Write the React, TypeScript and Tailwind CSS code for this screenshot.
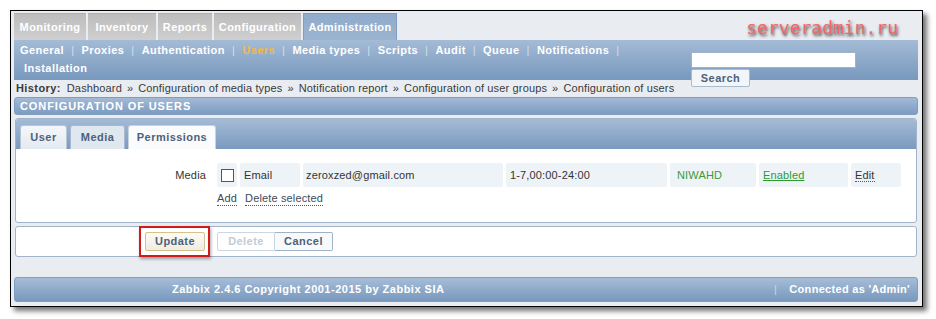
import React from "react";

const mainTabs = [
  { label: "Monitoring", w: "w-[72px]" },
  { label: "Inventory", w: "w-[68px]" },
  { label: "Reports", w: "w-[54px]" },
  { label: "Configuration", w: "w-[87px]" },
];

const subMenu = ["General", "Proxies", "Authentication", "Users", "Media types", "Scripts", "Audit", "Queue", "Notifications"];

const history = [
  "Dashboard",
  "Configuration of media types",
  "Notification report",
  "Configuration of user groups",
  "Configuration of users",
];

const Sep = () => <span className="mx-[7px] font-normal text-[#d3deea]">|</span>;

const App = () => {
  return (
    <div className="w-[936px] h-[319px] bg-white pt-[10px] pl-[10px] font-['Tahoma','Liberation_Sans',Arial,sans-serif] text-[11px] tracking-[0.15px] text-[#333]">
      <div className="w-[913px] h-[297px] border border-black bg-[#e9edf2] shadow-[4px_4px_5px_rgba(0,0,0,0.55)] pl-[3px] pr-[4px] pt-[2px] pb-[4px] flex flex-col">
        {/* main menu */}
        <div className="flex h-[27px] shrink-0">
          <div className="flex gap-[2px] bg-[#e9edf2] tracking-[0.4px]">
            {mainTabs.map((t) => (
              <div
                key={t.label}
                className={`${t.w} h-full flex items-center justify-center bg-linear-to-b from-[#bdbdbd] to-[#cfcfcf] border-t border-[#b0b0b0] text-white font-bold`}
              >
                {t.label}
              </div>
            ))}
            <div className="w-[94px] h-full flex items-center justify-center bg-linear-to-b from-[#8fabcb] to-[#9cb4d0] border-t border-x border-[#7f9dc0] text-white font-bold">
              Administration
            </div>
          </div>
          <div className="ml-auto mr-[20px] self-end mb-[1px] font-['DejaVu_Sans_Mono',monospace] text-[18px] leading-[22px] tracking-normal text-[#f26868] [text-shadow:1px_2px_3px_rgba(30,30,30,0.85)]">
            serveradmin.ru
          </div>
        </div>

        {/* sub menu */}
        <div className="relative flex h-[40px] shrink-0 bg-linear-to-b from-[#a3bbd6] to-[#7898bd] text-white font-bold tracking-[0.45px]">
          <div className="pt-[1px] leading-[18px]">
            <div className="pl-[6px] flex">
              {subMenu.map((s, i) => (
                <span key={s} className="flex">
                  {i > 0 && <Sep />}
                  <span className={s === "Users" ? "text-[#f3b94a]" : ""}>{s}</span>
                </span>
              ))}
              <Sep />
            </div>
            <div className="pl-[10px]">Installation</div>
          </div>
          <div className="absolute left-[677px] top-[12px] z-10 flex flex-col items-start">
            <div className="w-[165px] h-[16px] bg-white border border-[#9fb4cc]" />
            <div className="mt-[1px] w-[59px] h-[18px] flex items-center justify-center bg-[#f3f6f9] border border-[#a9bbcf] rounded-[2px] text-[#4a6380] font-bold">
              Search
            </div>
          </div>
        </div>

        {/* history */}
        <div className="h-[16px] shrink-0 pl-[2px] flex items-center text-[#3a3a3a]">
          <span className="font-bold mr-[6px] tracking-[0.4px]">History:</span>
          {history.map((h, i) => (
            <span key={h}>
              {i > 0 && <span className="mx-[5px]">»</span>}
              {h}
            </span>
          ))}
        </div>

        {/* header */}
        <div className="mt-[1px] h-[18px] shrink-0 rounded-[3px] border border-[#7f9dbf] bg-linear-to-b from-[#a3bad5] to-[#7c9cc1] flex items-center pl-[5px] text-white font-bold tracking-[0.9px]">
          CONFIGURATION OF USERS
        </div>

        {/* form panel */}
        <div className="mt-[3px] mx-[1px] h-[105px] shrink-0 rounded-[3px] border border-[#a2b4c8] bg-white flex flex-col overflow-hidden">
          <div className="h-[30px] shrink-0 bg-linear-to-b from-[#a4bbd6] to-[#7a9abf] flex items-end pl-[4px] gap-[3px] font-bold tracking-[0.45px] text-[#4e6179]">
            <div className="w-[47px] h-[24px] rounded-t-[3px] border border-b-0 border-[#b7c6d6] bg-linear-to-b from-[#f4f7fa] to-[#e3eaf1] flex items-center justify-center">
              User
            </div>
            <div className="w-[55px] h-[24px] rounded-t-[3px] border border-b-0 border-[#a9bace] bg-[#dfe7ef] flex items-center justify-center">
              Media
            </div>
            <div className="w-[88px] h-[24px] rounded-t-[3px] border border-b-0 border-[#c7d3df] bg-[#fafbfc] flex items-center justify-center">
              Permissions
            </div>
          </div>

          <div className="pt-[14px] flex">
            <div className="w-[190px] pt-[4px] text-right">Media</div>
            <div className="ml-[11px] flex flex-col">
              <div className="flex gap-[3px] h-[24px]">
                <div className="w-[20px] bg-[#eef3f7] rounded-[2px] flex items-center justify-center">
                  <div className="w-[13px] h-[13px] border border-[#555] bg-white" />
                </div>
                <div className="w-[60px] bg-[#eef3f7] rounded-[2px] flex items-center pl-[4px]">Email</div>
                <div className="w-[200px] bg-[#eef3f7] rounded-[2px] flex items-center pl-[3px]">zeroxzed@gmail.com</div>
                <div className="w-[161px] bg-[#eef3f7] rounded-[2px] flex items-center pl-[4px]">1-7,00:00-24:00</div>
                <div className="w-[86px] bg-[#eef3f7] rounded-[2px] flex items-center pl-[7px] text-[#3c9a3c]">NIWAHD</div>
                <div className="w-[89px] bg-[#eef3f7] rounded-[2px] flex items-center pl-[4px]">
                  <span className="text-[#2f9a2f] underline">Enabled</span>
                </div>
                <div className="w-[50px] bg-[#eef3f7] rounded-[2px] flex items-center pl-[4px]">
                  <span className="border-b border-dotted border-[#555] leading-[12px]">Edit</span>
                </div>
              </div>
              <div className="mt-[5px] flex gap-[8px] text-[#3b4a5a]">
                <span className="border-b border-dotted border-[#555] leading-[13px]">Add</span>
                <span className="border-b border-dotted border-[#555] leading-[13px]">Delete selected</span>
              </div>
            </div>
          </div>
        </div>

        {/* buttons */}
        <div className="mt-[3px] mx-[1px] h-[31px] shrink-0 rounded-[3px] border border-[#a2b4c8] bg-white flex items-center pl-[129px] font-bold tracking-[0.45px]">
          <div className="relative">
            <div className="absolute -left-[6px] -right-[5px] -top-[6px] -bottom-[6px] border-2 border-[#d21a1a] shadow-[1px_2px_3px_rgba(0,0,0,0.35)]" />
            <div className="relative w-[60px] h-[19px] rounded-[2px] border border-[#d8bf8c] bg-linear-to-b from-[#fcfbf6] to-[#efece1] flex items-center justify-center text-[#4e6179]">
              Update
            </div>
          </div>
          <div className="ml-[12px] flex">
            <div className="w-[58px] h-[19px] rounded-l-[2px] border border-[#cbd6e1] bg-white flex items-center justify-center text-[#c2cbd5]">
              Delete
            </div>
            <div className="w-[58px] h-[19px] rounded-r-[2px] border border-l-0 border-[#9fb1c4] bg-[#f7f9fb] flex items-center justify-center text-[#4e6179]">
              Cancel
            </div>
          </div>
        </div>

        {/* footer */}
        <div className="mt-[20px] h-[25px] shrink-0 rounded-[3px] border border-[#7f9dbf] bg-linear-to-b from-[#a6bdd7] to-[#7898bd] flex items-center text-white font-bold tracking-[0.5px]">
          <span className="ml-[157px]">Zabbix 2.4.6 Copyright 2001-2015 by Zabbix SIA</span>
          <span className="ml-auto font-normal text-[#c7d4e3]">|</span>
          <span className="ml-[12px] mr-[7px] tracking-[0.3px]">Connected as 'Admin'</span>
        </div>
      </div>
    </div>
  );
};

export default App;
